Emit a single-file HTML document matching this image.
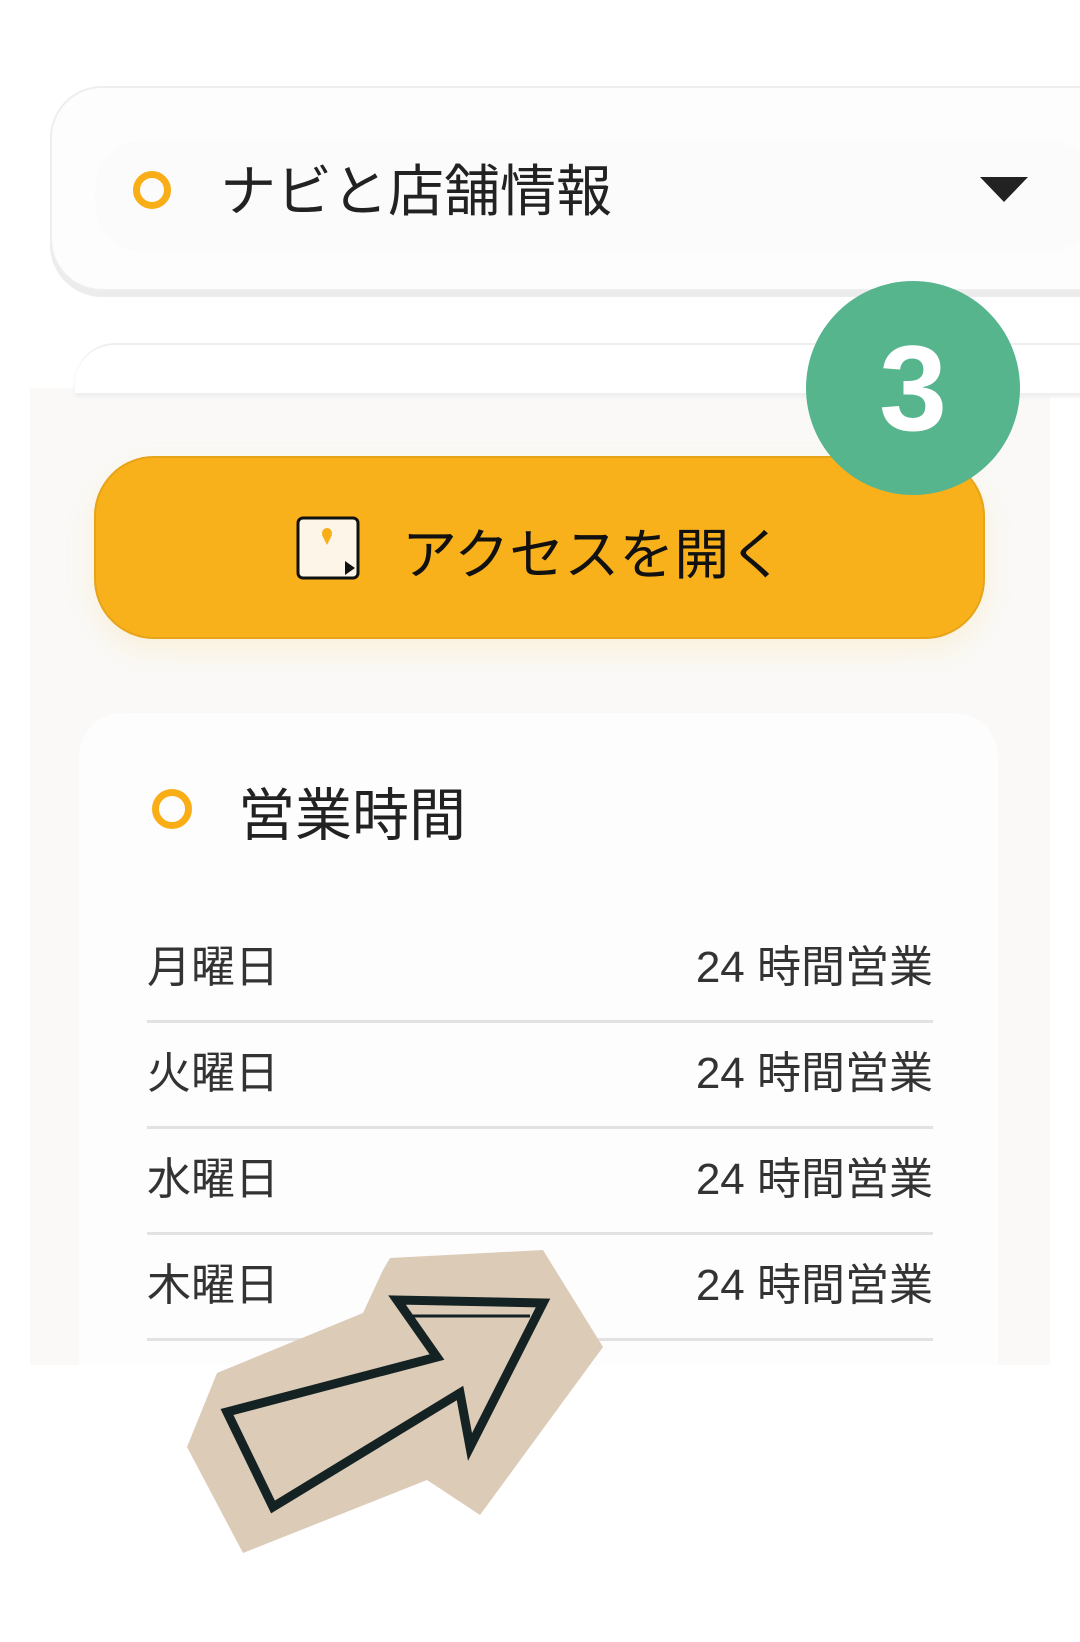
<!DOCTYPE html>
<html><head><meta charset="utf-8"><style>
*{margin:0;padding:0;box-sizing:border-box}
body{width:1080px;height:1642px;background:#fff;position:relative;overflow:hidden;font-family:"Liberation Sans","Noto Sans CJK JP",sans-serif;color:#222}
.abs{position:absolute}
.ring{position:absolute;border:7px solid #f9ae17;border-radius:50%}
.row{position:absolute;left:147px;width:786px;height:106px;border-bottom:3px solid #e2e2e2;font-size:44px;color:#333}
.row span{position:absolute;top:14px}
.row .r{right:0}
</style></head><body>
<div class="abs" style="left:30px;top:388px;width:1020px;height:977px;background:#faf9f7"></div>
<div class="abs" style="left:50px;top:86px;width:1100px;height:205px;border-radius:52px;background:#fdfdfd;border:2px solid #eee;box-shadow:0 6px 0 #ececec"></div>
<div class="abs" style="left:95px;top:140px;width:1000px;height:112px;border-radius:50px;background:#fbfbfb"></div>
<div class="ring" style="left:133px;top:171px;width:38px;height:38px"></div>
<div class="abs" style="left:220px;top:147px;font-size:56px;color:#222">ナビと店舗情報</div>
<div class="abs" style="left:980px;top:177px;width:0;height:0;border-left:24px solid transparent;border-right:24px solid transparent;border-top:25px solid #222"></div>
<div class="abs" style="left:75px;top:343px;width:1080px;height:50px;border-radius:40px 40px 0 0;background:#fff;border-top:2px solid #eee;box-shadow:0 4px 4px #eee"></div>
<div class="abs" style="left:94px;top:456px;width:891px;height:183px;border-radius:60px;background:#f9b11b;border:2px solid #e6a419;box-shadow:0 12px 30px rgba(249,177,27,.12)"></div>
<svg class="abs" style="left:295px;top:515px" width="68" height="68" viewBox="0 0 68 68"><rect x="3" y="3" width="60" height="60" rx="5" fill="#fdf6e8" stroke="#111" stroke-width="3"/><circle cx="32" cy="18" r="5" fill="#f9ae17"/><path d="M27 20 L37 20 L32 30Z" fill="#f9ae17"/><path d="M50 46 L60 53 L50 60Z" fill="#111"/></svg>
<div class="abs" style="left:402px;top:510px;font-size:55px;color:#111">アクセスを開く</div>
<div class="abs" style="left:806px;top:281px;width:214px;height:214px;border-radius:50%;background:#56b58d"></div>
<div class="abs" style="left:806px;top:318px;width:214px;text-align:center;font-size:122px;font-weight:bold;color:#fff;line-height:140px">3</div>
<div class="abs" style="left:79px;top:713px;width:919px;height:652px;border-radius:44px 44px 0 0;background:#fdfdfd"></div>
<div class="ring" style="left:152px;top:789px;width:40px;height:40px"></div>
<div class="abs" style="left:238px;top:770px;font-size:57px;color:#222">営業時間</div>
<div class="row" style="top:917px"><span>月曜日</span><span class="r">24 時間営業</span></div>
<div class="row" style="top:1023px"><span>火曜日</span><span class="r">24 時間営業</span></div>
<div class="row" style="top:1129px"><span>水曜日</span><span class="r">24 時間営業</span></div>
<div class="row" style="top:1235px"><span>木曜日</span><span class="r">24 時間営業</span></div>
<svg class="abs" style="left:0;top:0" width="1080" height="1642">
<path d="M390 1258 L543 1250 L603 1347 L480 1515 L427 1480 L243 1553 L187 1447 L217 1373 L363 1313 L383 1270Z" fill="#dccbb7"/>
<path d="M227 1412 L273 1507 L460 1393 L470 1447 L543 1303 L397 1300 L437 1357 Z" fill="none" stroke="#142224" stroke-width="9" stroke-linejoin="miter"/>
<path d="M410 1316 L530 1316" stroke="#142224" stroke-width="3"/>
</svg>
</body></html>
